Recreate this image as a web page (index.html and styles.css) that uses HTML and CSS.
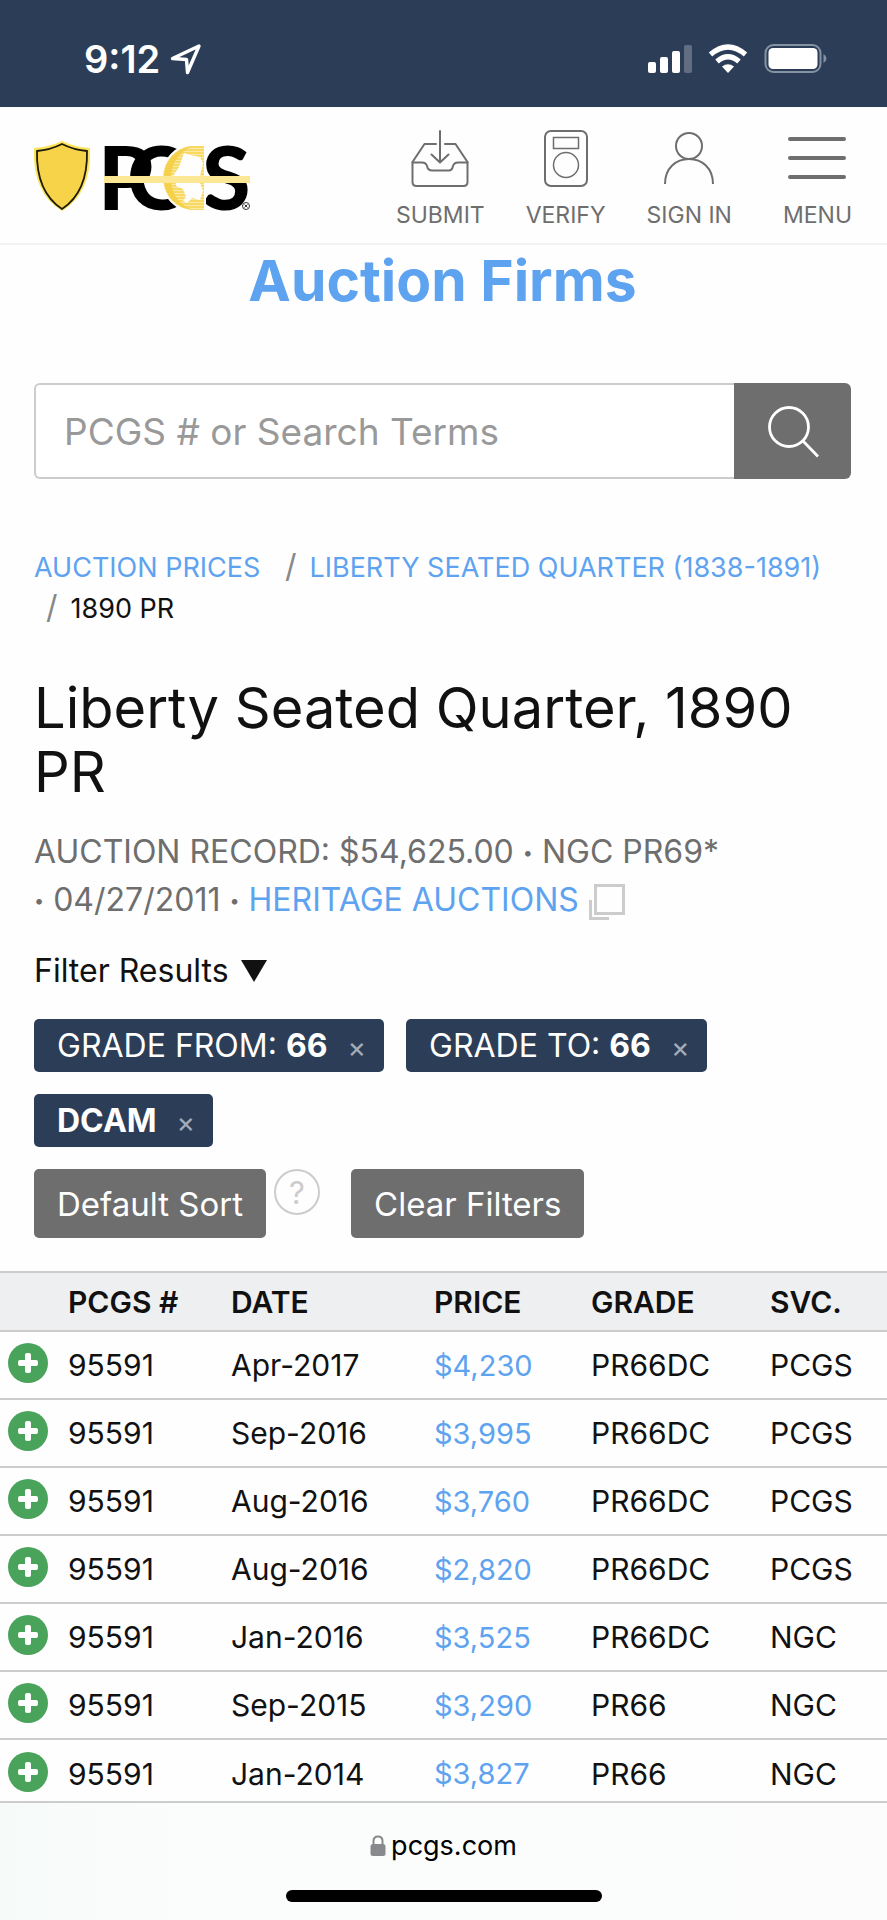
FILE: index.html
```html
<!DOCTYPE html>
<html lang="en">
<head>
    <meta charset="UTF-8">
    <meta name="viewport" content="width=device-width, initial-scale=1.0">
    <title>Liberty Seated Quarter, 1890 PR</title>
    <link rel="stylesheet" href="styles.css">
</head>
<body>

    <!-- Phone status bar -->
    <div class="status-bar">
        <div class="status-time">
            <span>9:12</span>
            <svg width="32" height="32" viewBox="0 0 32 32" fill="none" stroke="#fff" stroke-width="3.4" stroke-linejoin="round"><path d="M29 3 L2.500 15.500 L16.500 16.500 L17.500 29.500 Z"/></svg>
        </div>
        <div class="status-icons">
            <svg width="44" height="30" viewBox="0 0 44 30" fill="#fff">
                <rect x="0" y="18" width="8" height="11" rx="2"/>
                <rect x="12" y="13" width="8" height="16" rx="2"/>
                <rect x="24" y="7" width="8" height="22" rx="2"/>
                <rect x="36" y="1" width="8" height="28" rx="2" opacity="0.25"/>
            </svg>
            <svg width="40" height="30" viewBox="0 0 40 30">
                <g fill="none" stroke="#fff" stroke-width="5.200">
                    <path d="M2.500 10.500 Q20 -4.500 37.500 10.500"/>
                    <path d="M9 17.500 Q20 8 31 17.500"/>
                </g>
                <path fill="#fff" d="M14 22.500 Q20 18 26 22.500 L20 29 Z"/>
            </svg>
            <svg width="64" height="32" viewBox="0 0 64 32">
                <rect x="1.500" y="2" width="55" height="27" rx="8" fill="none" stroke="#8492a3" stroke-width="2"/>
                <rect x="4.500" y="5" width="49" height="21" rx="4.500" fill="#fff"/>
                <path d="M59.500 11 Q62.500 13 62.500 15.500 Q62.500 18 59.500 20 Z" fill="#8492a3"/>
            </svg>
        </div>
    </div>

    <header class="site-header">
        <a class="logo" href="#" aria-label="PCGS">
            <svg width="218" height="72" viewBox="0 0 218 72">
                <defs>
                    <pattern id="stripes" width="4" height="3" patternUnits="userSpaceOnUse">
                        <rect width="4" height="3" fill="#fbeaa6"/>
                        <rect width="4" height="2" fill="#f8d964"/>
                    </pattern>
                </defs>
                <path d="M28 1 Q41 7 56 8 Q58 53 28 71 Q-2 53 0 8 Q15 7 28 1 Z" fill="#fbe35c"/>
                <path d="M28 4 Q40 10 53 11 Q54 52 28 69 Q2 52 3 11 Q16 10 28 4 Z" fill="#f7d34a" stroke="#1d1a08" stroke-width="1.800"/>
                <g class="logo-letters">
                    <text x="64" y="70">P</text>
                    <text x="93" y="70">C</text>
                    <text x="168" y="70">S</text>
                </g>
                <path d="M171 5 H160 C142 5 128 20 128 38 C128 56 142 71 160 71 H171 Z" fill="url(#stripes)" stroke="#fefefe" stroke-width="2"/>
                <path d="M160 6 C143 7 130 20 130 38 C130 56 143 69 160 70 C145 66 137 54 137 38 C137 22 147 10 160 6 Z" fill="#f5d04b"/>
                <path d="M150 13 L156 15 L166 17 L169 23 L166 36 V43 L169 51 L166 60 L158 58 L153 63 L149 61 L152 57 L149 49 L142 46 V40 L139 36 L145 27 Z" fill="#fefefe"/>
                <rect x="70" y="36" width="146" height="7" fill="#fbe794"/>
                <circle cx="212" cy="66" r="3.500" fill="#fefefe" stroke="#333" stroke-width="1"/>
                <path d="M210.500 64.500 L213.500 67.500 M213.500 64.500 L210.500 67.500" stroke="#333" stroke-width="1"/>
            </svg>
        </a>
        <nav class="main-nav">
            <a class="nav-item" href="#">
                <svg width="60" height="60" viewBox="0 0 60 60" fill="none" stroke="#6e6e6e" stroke-width="2" stroke-linecap="round" stroke-linejoin="round">
                    <path d="M26 16 H14.500 L2.500 34 V54 Q2.500 58 6.500 58 H53.500 Q57.500 58 57.500 54 V34 L45.500 16 H35"/>
                    <path d="M2.500 34.500 H12 Q16 34.500 17 38 Q18 42.500 22 42.500 H39 Q42 42.500 43 38 Q44 34.500 48 34.500 H57.500"/>
                    <path d="M30 3 V34 M21.500 26.500 L30 34.500 L38.500 26.500"/>
                </svg>
                <span>SUBMIT</span>
            </a>
            <a class="nav-item" href="#">
                <svg width="60" height="60" viewBox="0 0 60 60" fill="none" stroke="#6e6e6e" stroke-width="2">
                    <rect x="9" y="3" width="42" height="55" rx="6"/>
                    <rect x="17.500" y="9.500" width="25" height="11" stroke-width="1.500"/>
                    <circle cx="30" cy="37" r="12.500" stroke-width="1.500"/>
                </svg>
                <span>VERIFY</span>
            </a>
            <a class="nav-item" href="#">
                <svg width="60" height="60" viewBox="0 0 60 60" fill="none" stroke="#6e6e6e" stroke-width="2">
                    <circle cx="30" cy="18" r="13"/>
                    <path d="M6 56 C6 40 17 31 30 31 C43 31 54 40 54 56"/>
                </svg>
                <span>SIGN IN</span>
            </a>
            <a class="nav-item nav-menu" href="#">
                <svg width="60" height="60" viewBox="0 0 60 60" fill="none" stroke="#6e6e6e" stroke-width="4" stroke-linecap="round">
                    <path d="M3 11 H57 M3 30 H57 M3 49 H57"/>
                </svg>
                <span>MENU</span>
            </a>
        </nav>
    </header>

    <main class="main-content">
        <div class="container">
            <h2 class="section-title"><a href="#">Auction Firms</a></h2>

            <form class="search-form">
                <input type="text" name="search" aria-label="Search" placeholder="PCGS # or Search Terms">
                <button type="submit" aria-label="Search">
                    <svg width="54" height="54" viewBox="0 0 54 54" fill="none" stroke="#fff" stroke-width="2.800">
                        <circle cx="23" cy="23" r="19.500"/>
                        <path d="M37 37 L52 52.500"/>
                    </svg>
                </button>
            </form>

            <div class="breadcrumb">
                <a href="#">AUCTION PRICES</a>
                <span class="crumb"><i>/</i><a href="#">LIBERTY SEATED QUARTER (1838-1891)</a></span>
                <span class="crumb"><i>/</i>1890 PR</span>
            </div>

            <h1>Liberty Seated Quarter, 1890 PR</h1>

            <p class="record">
                <span>AUCTION RECORD: $54,625.00 <i>•</i> NGC PR69*</span>
                <span><i>•</i> 04/27/2011 <i>•</i> <a href="#">HERITAGE AUCTIONS</a>
                <svg width="38" height="38" viewBox="0 0 38 38" fill="none" stroke="#ccc" stroke-width="3"><path d="M7.500 2.500 H35.500 V30.500 H7.500 Z"/><path d="M2.500 17 V35.500 H21"/></svg></span>
            </p>

            <button class="filter-toggle" type="button">Filter Results
                <svg width="26" height="22" viewBox="0 0 26 22"><path d="M0 0 H26 L13 22 Z" fill="#111"/></svg>
            </button>

            <div class="chips">
                <button class="chip" type="button">GRADE FROM: <b>66</b><span>×</span></button>
                <button class="chip" type="button">GRADE TO: <b>66</b><span>×</span></button>
                <button class="chip" type="button"><b>DCAM</b><span>×</span></button>
            </div>

            <div class="actions">
                <button class="btn" type="button">Default Sort</button>
                <button class="help" type="button">?</button>
                <button class="btn" type="button">Clear Filters</button>
            </div>
        </div>

        <table class="results">
            <thead>
                <tr><th class="col-add"></th><th class="col-number">PCGS #</th><th class="col-date">DATE</th><th class="col-price">PRICE</th><th class="col-grade">GRADE</th><th>SVC.</th></tr>
            </thead>
            <tbody>
                <tr><td><button class="add" type="button" aria-label="Expand"></button></td><td>95591</td><td>Apr-2017</td><td><a href="#">$4,230</a></td><td>PR66DC</td><td>PCGS</td></tr>
                <tr><td><button class="add" type="button" aria-label="Expand"></button></td><td>95591</td><td>Sep-2016</td><td><a href="#">$3,995</a></td><td>PR66DC</td><td>PCGS</td></tr>
                <tr><td><button class="add" type="button" aria-label="Expand"></button></td><td>95591</td><td>Aug-2016</td><td><a href="#">$3,760</a></td><td>PR66DC</td><td>PCGS</td></tr>
                <tr><td><button class="add" type="button" aria-label="Expand"></button></td><td>95591</td><td>Aug-2016</td><td><a href="#">$2,820</a></td><td>PR66DC</td><td>PCGS</td></tr>
                <tr><td><button class="add" type="button" aria-label="Expand"></button></td><td>95591</td><td>Jan-2016</td><td><a href="#">$3,525</a></td><td>PR66DC</td><td>NGC</td></tr>
                <tr><td><button class="add" type="button" aria-label="Expand"></button></td><td>95591</td><td>Sep-2015</td><td><a href="#">$3,290</a></td><td>PR66</td><td>NGC</td></tr>
                <tr><td><button class="add" type="button" aria-label="Expand"></button></td><td>95591</td><td>Jan-2014</td><td><a href="#">$3,827</a></td><td>PR66</td><td>NGC</td></tr>
            </tbody>
        </table>
    </main>

    <!-- Browser address bar -->
    <footer class="browser-bar">
        <div class="address">
            <svg width="16" height="22" viewBox="0 0 16 22"><rect x="0.500" y="9" width="15" height="12" rx="2.500" fill="#88898c"/><path d="M3.500 10 V6 Q3.500 1.500 8 1.500 Q12.500 1.500 12.500 6 V10" fill="none" stroke="#88898c" stroke-width="2"/></svg>
            <span>pcgs.com</span>
        </div>
        <div class="home-indicator"></div>
    </footer>

</body>
</html>
```
FILE: styles.css
```css
* {
    box-sizing: border-box;
}

body {
    margin: 0;
    height: 100vh;
    display: flex;
    flex-direction: column;
    font-family: Inter, "Liberation Sans", sans-serif;
    background-color: #fefefe;
    color: #111;
}

svg {
    display: block;
}

a {
    color: #5ea3f0;
    text-decoration: none;
}

button {
    font-family: inherit;
    border: none;
    padding: 0;
    cursor: pointer;
}

/* Status bar */
.status-bar {
    flex-shrink: 0;
    display: flex;
    justify-content: space-between;
    align-items: center;
    height: 107px;
    padding: 11px 59px 0 84px;
    background-color: #2c3e57;
    color: #fff;
}

.status-time,
.status-icons {
    display: flex;
    align-items: center;
}

.status-time {
    gap: 10px;
    font-size: 38px;
    font-weight: 600;
}

.status-icons {
    gap: 16px;
}

/* Header */
.site-header {
    flex-shrink: 0;
    display: flex;
    justify-content: space-between;
    align-items: flex-start;
    padding: 21px 35px 13px 34px;
    border-bottom: 2px solid #f2f2f2;
}

.logo {
    padding-top: 12px;
}

.logo svg {
    overflow: visible;
}

.logo-letters {
    font-family: Lato, sans-serif;
    font-size: 88px;
    font-weight: 900;
    fill: #000;
}

.main-nav {
    display: flex;
    gap: 41px;
}

.nav-item {
    display: flex;
    flex-direction: column;
    align-items: center;
    gap: 12px;
    font-size: 23px;
    line-height: 30px;
    color: #6e6e6e;
}

.nav-menu {
    margin-left: 10px;
}

/* Main page content */
.main-content {
    flex: 1;
    min-height: 0;
    overflow: hidden;
}

.container {
    padding: 4px 36px 33px 34px;
}

.section-title {
    margin: 0 0 70px;
    font-size: 57px;
    font-weight: 700;
    line-height: 64px;
    text-align: center;
}

.search-form {
    display: flex;
    height: 96px;
    margin-bottom: 68px;
}

.search-form input {
    flex: 1;
    min-width: 0;
    padding: 0 28px;
    border: 2px solid #ccc;
    border-right: none;
    border-radius: 6px 0 0 6px;
    font-family: inherit;
    font-size: 37px;
    background-color: #fff;
    outline: none;
}

.search-form input::placeholder {
    color: #999;
}

.search-form button {
    display: flex;
    align-items: center;
    justify-content: center;
    width: 117px;
    border-radius: 0 6px 6px 0;
    background-color: #6e6e6e;
}

.breadcrumb {
    margin-bottom: 47px;
    font-size: 27px;
    line-height: 41px;
}

.crumb {
    display: inline-block;
}

.crumb i {
    margin: 0 13px 0 12px;
    font-size: 32px;
    font-style: normal;
    line-height: 1;
    color: #888;
}

.breadcrumb > a {
    margin-right: 5px;
}

h1 {
    margin: 0 0 24px;
    font-size: 56px;
    font-weight: 400;
    line-height: 64px;
}

.record {
    margin: 0 0 27px;
    font-size: 32px;
    line-height: 48px;
    color: #6e6e6e;
}

.record span {
    display: block;
}

.record i {
    font-size: 18px;
    font-style: normal;
    line-height: 1;
    vertical-align: 4px;
}

.record svg {
    display: inline-block;
    vertical-align: middle;
}

.filter-toggle {
    display: flex;
    align-items: center;
    gap: 12px;
    margin-bottom: 28px;
    background: none;
    font-size: 32px;
    line-height: 40px;
    color: #111;
}

.chips {
    display: flex;
    flex-wrap: wrap;
    gap: 22px;
    margin-bottom: 22px;
}

.chip {
    height: 53px;
    padding: 0 18px 0 23px;
    border-radius: 5px;
    background-color: #2c3e57;
    color: #fff;
    font-size: 32px;
}

.chip span {
    margin-left: 20px;
    font-size: 28px;
    color: #a3acb8;
}

.actions {
    display: flex;
    align-items: flex-start;
}

.btn {
    height: 69px;
    padding: 0 23px;
    border-radius: 5px;
    background-color: #6e6e6e;
    color: #fff;
    font-size: 33px;
}

.help {
    width: 46px;
    height: 46px;
    margin: 0 31px 0 8px;
    border: 2px solid #ccc;
    border-radius: 50%;
    background: none;
    font-size: 31px;
    color: #ccc;
}

/* Results table */
.results {
    width: 100%;
    table-layout: fixed;
    border-collapse: collapse;
    font-size: 30px;
    line-height: 36px;
}

.results th,
.results td {
    height: 68px;
    padding: 0;
    border-top: 2px solid #ccc;
    text-align: left;
}

.results th {
    height: 59px;
    background-color: #eeeff1;
    font-weight: 600;
}

.results a {
    font-size: 29px;
}

.col-add {
    width: 68px;
}

.col-number {
    width: 163px;
}

.col-date {
    width: 203px;
}

.col-price {
    width: 157px;
}

.col-grade {
    width: 179px;
}

.add {
    display: grid;
    place-items: center;
    place-content: center;
    width: 40px;
    height: 40px;
    margin: 0 0 4px 8px;
    border-radius: 50%;
    background-color: #4aa35a;
}

.add::before,
.add::after {
    content: "";
    grid-area: 1 / 1;
    width: 20px;
    height: 6px;
    border-radius: 2px;
    background-color: #fff;
}

.add::after {
    width: 6px;
    height: 20px;
}

/* Browser bar */
.browser-bar {
    flex-shrink: 0;
    display: flex;
    flex-direction: column;
    align-items: center;
    justify-content: space-between;
    height: 119px;
    padding: 27px 0 18px;
    border-top: 2px solid #ccc;
    background: linear-gradient(90deg, #f6faf8, #fbfcfc 20%, #fcfcfc);
}

.address {
    display: flex;
    align-items: center;
    gap: 5px;
    font-size: 27px;
    line-height: 32px;
    color: #000;
}

.home-indicator {
    width: 316px;
    height: 12px;
    border-radius: 6px;
    background-color: #000;
}
```
